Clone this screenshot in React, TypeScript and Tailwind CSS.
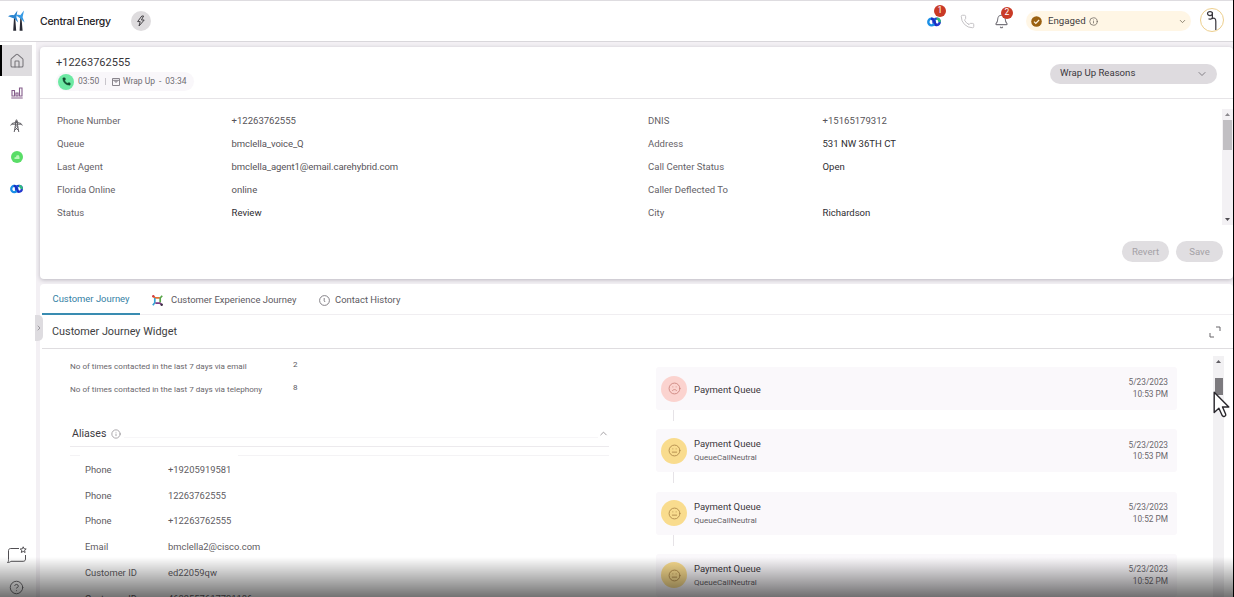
import React from 'react';
import { House, Phone, Bell, Info, ChevronDown, ChevronUp, ChevronRight, Frown, Meh, CircleHelp } from 'lucide-react';

const leftFields = [
  ['Phone Number', '+12263762555'],
  ['Queue', 'bmclella_voice_Q'],
  ['Last Agent', 'bmclella_agent1@email.carehybrid.com'],
  ['Florida Online', 'online'],
  ['Status', 'Review'],
];
const rightFields = [
  ['DNIS', '+15165179312'],
  ['Address', '531 NW 36TH CT'],
  ['Call Center Status', 'Open'],
  ['Caller Deflected To', ''],
  ['City', 'Richardson'],
];
const darkValues = ['Review', '531 NW 36TH CT', 'Open', 'Richardson'];
const aliases = [
  ['Phone', '+19205919581'],
  ['Phone', '12263762555'],
  ['Phone', '+12263762555'],
  ['Email', 'bmclella2@cisco.com'],
  ['Customer ID', 'ed22059qw'],
  ['Customer ID', '4689557617731186'],
];
const events = [
  { note: '', time: '10:53 PM' },
  { note: 'QueueCallNeutral', time: '10:53 PM' },
  { note: 'QueueCallNeutral', time: '10:52 PM' },
  { note: 'QueueCallNeutral', time: '10:52 PM' },
];

function Turbines() {
  return (
    <svg className="h-[22px] w-[18px]" viewBox="0 0 18 22" fill="none">
      <path d="M6 8 5.2 20.8h3L7.2 8zM12.3 8l-.7 12.8h3L13.5 8z" fill="#292b35" />
      <path d="M0 6.2c2-1 4-1.6 6-.9L9.4.6 8.4 7.2l1.8 5.2L6.2 8.6z" fill="#2c86d0" />
      <path d="M7.5 5c1.6-.4 3.4-.3 4.8.2L16 .6l-1.4 6.6 2 5.2-4.2-4z" fill="#379be6" />
    </svg>
  );
}

function Webex({ className }: { className: string }) {
  return (
    <svg className={className} viewBox="0 0 14 10" fill="none" strokeWidth="2.4">
      <circle cx="9.6" cy="4.8" r="3.2" stroke="#2438cf" />
      <path d="M9.6 1.6c2 0 3.3 1.5 3 3.6" stroke="#2fc07c" />
      <ellipse cx="4.6" cy="5" rx="3.3" ry="3.4" stroke="#1a8fe6" />
      <path d="M4 1.7c2 0 3 1.5 3.6 3.3.5 1.7 1.1 2.7 2 3" stroke="#1a2fc2" />
    </svg>
  );
}

function Field({ label, value }: { label: string; value: string }) {
  return (
    <div className="flex h-[23.1px] items-center">
      <span className="w-[174.5px] text-[#656267]">{label}</span>
      <span className={darkValues.includes(value) ? 'text-[#2e2c30]' : value.includes('_') ? 'tracking-[-0.09px] text-[#565358]' : 'text-[#565358]'}>{value}</span>
    </div>
  );
}

function Header() {
  return (
    <header className="flex h-[42px] shrink-0 items-center border-t border-b border-t-[#dedce0] border-b-[#d9d7db] bg-white">
      <div className="ml-2 flex w-8 items-center"><Turbines /></div>
      <h1 className="mt-px w-[91px] font-['Inter',sans-serif] text-[10.5px] font-medium tracking-[-0.25px] text-[#242226]">Central Energy</h1>
      <div className="flex size-5 items-center justify-center rounded-full bg-[#dedcde]">
        <svg className="size-[12px]" viewBox="0 0 12 12" fill="none" stroke="#464448" strokeWidth="1" strokeLinejoin="round"><path d="M6.8 1 2.6 6.6h2.6L4 11l5.2-6H6.4L8.6 1z" /></svg>
      </div>
      <div className="ml-auto flex h-full items-center">
        <div className="relative mr-[19px] flex">
          <Webex className="mt-px h-[10px] w-[14px]" />
          <span className="absolute -top-[11px] left-[7px] flex size-[12px] items-center justify-center rounded-full bg-[#c93a26] text-[8.5px] text-white">1</span>
        </div>
        <Phone className="mr-[19px] size-[15px] text-[#bbb9bd]" strokeWidth={1.4} />
        <div className="relative mr-[17px] flex">
          <Bell className="size-[15px] text-[#77757c]" strokeWidth={1.7} />
          <span className="absolute -top-[7px] left-[7px] flex size-[12px] items-center justify-center rounded-full bg-[#c93a26] text-[8.5px] text-white">2</span>
        </div>
        <div className="mr-[9px] flex h-5 w-[165px] items-center rounded-full bg-[#fff6e5] pr-[4px] pl-[5px]">
          <svg className="size-[11px]" viewBox="0 0 11 11">
            <circle cx="5.5" cy="5.5" r="5.3" fill="#9a6010" />
            <path d="m3 5.6 1.8 1.8L8.1 4" stroke="#fff6e5" strokeWidth="1.2" fill="none" />
          </svg>
          <span className="mt-px ml-[6px] w-[38px] text-[9.7px] text-[#3f3d3e]">Engaged</span>
          <Info className="ml-[3px] size-[9px] text-[#6c665e]" strokeWidth={2} />
          <ChevronDown className="ml-auto size-[9px] text-[#807764]" strokeWidth={2.3} />
        </div>
        <div className="-mt-[2px] mr-[9px] flex size-6 items-center justify-center rounded-full border border-[#edcf8d] bg-white">
          <svg className="size-[22px]" viewBox="0 0 22 22" fill="none" stroke="#37353b" strokeWidth="1.2">
            <ellipse cx="9" cy="4.6" rx="2.5" ry="2" />
            <path d="M11.4 3.5v4.8c0 2-2.8 2.2-3.9 1.5M11 9.6c2.8-1.2 3.8.4 3.8 3V21" />
          </svg>
        </div>
      </div>
    </header>
  );
}

function Sidebar() {
  return (
    <nav className="flex w-[36px] shrink-0 flex-col bg-white pt-[3px]">
      <div className="flex h-[31px] w-8 items-center justify-center border-l-2 border-black bg-[#dedcdf]">
        <House className="size-4 text-[#77757a]" strokeWidth={1.6} />
      </div>
      <div className="flex w-[33px] flex-col items-center">
        <svg className="mt-[11px] h-[12px] w-[12px]" viewBox="0 0 12 12" fill="none" stroke="#845c8a" strokeWidth="1.1">
          <path d="M.3 11h11.4M1 3.5h2.5V9H1zM5 6h2v3H5zM8.5 1H11v8H8.5z" />
        </svg>
        <svg className="mt-[20px] h-[14px] w-[13px]" viewBox="0 0 13 14" fill="none" stroke="#626066" strokeWidth="1">
          <path d="m5.5 2.5 1-1.8 1 1.8M4.2 13l1.3-7V2.5h2V6l1.3 7M.7 6.5 2 4.5l3.5-1h2l3.5 1 1.3 2M2 5.2h9M5 11l3.2-3M8 11 4.9 8M5.5 6l2 2" />
        </svg>
        <div className="mt-[18px] flex size-[12px] items-center justify-center rounded-full bg-[#59dd67]">
          <svg className="size-[8px]" viewBox="0 0 8 8"><path d="M1.5 6V4.5L3 4l.5-1.5L5.5 2l1 2v2z" fill="#b9f7b9" /></svg>
        </div>
        <Webex className="mt-[20.5px] h-[10px] w-[13px]" />
      </div>
      <div className="mt-auto flex w-[33px] flex-col items-center">
        <svg className="h-[18px] w-[20px]" viewBox="0 0 20 18" fill="none" stroke="#514f53">
          <path d="M12 2.5H3.7C2.3 2.5 1.5 3.4 1.5 4.6v8.9c0 2-.3 2.6-1 3 1.6.2 2.5-.5 3.5-1.2h12.2c1.5 0 2.3-.9 2.3-2.3V9" />
          <path d="m16.2.8.9 2 2.1.2-1.6 1.4.5 2.1-1.9-1.1-1.9 1.1.5-2.1L13.2 3l2.1-.2z" />
        </svg>
        <CircleHelp className="mt-[16px] mb-[2px] size-[15px] text-[#68666a]" strokeWidth={1.5} />
      </div>
    </nav>
  );
}

function Interaction() {
  return (
    <section className="flex h-[232px] shrink-0 flex-col rounded-[4px] bg-white shadow-[0_1px_4px_#bab7bf]">
      <div className="flex h-[52px] shrink-0 items-center border-b border-[#e6e4e7] pr-[16px] pl-[16px]">
        <div className="flex flex-col">
          <div className="h-[16px] pt-px text-[11px] leading-[16px] text-[#38363a]">+12263762555</div>
          <div className="mt-[2px] flex h-[19px] w-[138px] items-center rounded-full bg-[#f9f7fa] pl-[2px] text-[8.5px] text-[#706d73]">
            <div className="flex size-4 items-center justify-center rounded-full bg-[#6ce9a3]">
              <Phone className="size-[9px] fill-[#124e31] text-[#124e31]" strokeWidth={1} />
            </div>
            <span className="ml-[4px] w-[21px]">03:50</span>
            <span className="mx-[6px] h-[7px] w-px bg-[#c8c5cb]" />
            <svg className="mr-[3px] size-[8px]" viewBox="0 0 8 8" fill="none" stroke="#89858c"><path d="M.5.5h7v7h-7zM.5 2.3h7M3 2.3V4h2V2.3" /></svg>
            <span className="whitespace-nowrap">Wrap Up</span><span className="mx-[4px]">-</span><span>03:34</span>
          </div>
        </div>
        <div className="mt-[2px] ml-auto flex h-5 w-[167px] items-center justify-between rounded-full bg-[#dedbdf] pr-[9px] pl-[10px] text-[9.6px] text-[#3b383d]">
          Wrap Up Reasons<ChevronDown className="size-[12px] text-[#77747a]" strokeWidth={1.8} />
        </div>
      </div>
      <div className="mt-[10px] flex h-[116px] pl-[17px] text-[9.55px]">
        <div className="w-[591px] pt-[0.5px]">{leftFields.map(([a, b]) => <Field key={a} label={a} value={b} />)}</div>
        <div className="flex-1 pt-[0.5px]">{rightFields.map(([a, b]) => <Field key={a} label={a} value={b} />)}</div>
        <div className="flex w-[11px] flex-col items-center bg-[#f3f1f4] py-[4px]">
          <svg className="h-[3px] w-[5px]" viewBox="0 0 5 3"><path d="M0 3h5L2.5 0z" fill="#8b898e" /></svg>
          <div className="mt-[4px] h-[30px] w-[9px] bg-[#c1bfc3]" />
          <svg className="mt-auto h-[3px] w-[5px]" viewBox="0 0 5 3"><path d="M0 0h5L2.5 3z" fill="#4f4d52" /></svg>
        </div>
      </div>
      <div className="mt-[16px] flex justify-end gap-[7px] pr-[10px] text-[9.6px] text-[#a4a1a6]">
        <div className="flex h-[21px] w-[47px] items-center justify-center rounded-full bg-[#e0dee1] pt-px">Revert</div>
        <div className="flex h-[21px] w-[47px] items-center justify-center rounded-full bg-[#e0dee1] pt-px">Save</div>
      </div>
    </section>
  );
}

function JourneyIcon() {
  return (
    <svg className="size-[11px]" viewBox="0 0 11 11" fill="none" strokeWidth="1.7">
      <path d="m.8.8 2.4 2h4.6" stroke="#e57235" />
      <path d="M10.2.8 8.2 3v4.5" stroke="#57a447" />
      <path d="M.8 10.2l2-2.4V3" stroke="#36a3d5" />
      <path d="m10.2 10.2-2.4-2H3.4" stroke="#7c3b84" />
      <circle cx="1.3" cy="1.3" r="1.2" fill="#d43e43" /><circle cx="9.7" cy="9.7" r="1.2" fill="#403048" />
    </svg>
  );
}

function ClockIcon() {
  return (
    <svg className="size-[11px]" viewBox="0 0 11 11" fill="none" stroke="#77747a" strokeWidth=".9"><circle cx="5.5" cy="5.5" r="4.9" /><path d="M5.2 3v2.8l.9 1.2" /></svg>
  );
}

function Journey() {
  return (
    <section className="mt-[5px] flex min-h-0 flex-1 flex-col rounded-t-[4px] bg-white">
      <div className="ml-[2px] flex h-[31px] shrink-0 items-stretch border-b border-[#f0eef1] text-[9.45px] text-[#5d5a5f]">
        <div className="-mb-px flex w-[98px] items-center justify-center border-b-2 border-[#398cb1] pt-[2px] text-[#357fa5]">Customer Journey</div>
        <div className="mt-[2px] ml-[12px] flex w-[167px] items-center gap-[8px]"><JourneyIcon />Customer Experience Journey</div>
        <div className="mt-[2px] flex items-center gap-[5px]"><ClockIcon />Contact History</div>
      </div>
      <div className="ml-[2px] flex h-[34px] shrink-0 items-center justify-between border-b border-[#dfdde0] pr-[12px] pl-[10px] text-[10.85px] text-[#403e42]">
        <span className="mt-[2px]">Customer Journey Widget</span>
        <svg className="size-[12px]" viewBox="0 0 12 12" fill="none" stroke="#68666a"><path d="M7 1h4v4M1 7v4h4" /></svg>
      </div>
      <div className="flex min-h-0 flex-1 overflow-hidden">
        <div className="w-[569px] pt-[5px] pl-[30px]">
          <div className="flex h-[23px] items-center text-[8.1px] text-[#69666b]"><span className="mt-px w-[223px]">No of times contacted in the last 7 days via email</span><span className="mb-[3px] text-[#59565c]">2</span></div>
          <div className="flex h-[23px] items-center text-[8.1px] text-[#69666b]"><span className="mt-px w-[223px]">No of times contacted in the last 7 days via telephony</span><span className="mb-[3px] text-[#59565c]">8</span></div>
          <div className="mt-[21px] flex h-[26px] items-center border-b border-[#eceaed] pr-0 pl-[2px] text-[10.6px] text-[#3d3a3f]">
            Aliases<Info className="ml-[5px] size-[10px] text-[#8f8c91]" strokeWidth={1.8} />
            <div className="ml-[3px] mt-[7px] h-px flex-1 bg-[#f7f6f8]" />
            <ChevronUp className="size-[11px] text-[#8f8c91]" strokeWidth={1.8} />
          </div>
          <div className="mt-[8px] flex h-px justify-between"><span className="w-[10px] bg-[#f4f3f5]" /><span className="w-[371px] bg-[#f4f3f5]" /></div>
          <div className="pt-px pl-[15px] text-[9.4px] text-[#5e5b61]">
            {aliases.map(([a, b], i) => <div key={i} className="flex h-[25.75px] items-center"><span className="w-[83px]">{a}</span><span>{b}</span></div>)}
          </div>
        </div>
        <div className="ml-[47px] w-[521px] pt-[18px]">
          {events.map((e, i) => (
            <div key={i} className="h-[62.3px]">
              <div className="flex h-[43px] items-center rounded-[3px] bg-[#faf8fb] pr-[9px] pl-[5px]">
                <div className={i === 0 ? 'flex size-[26px] items-center justify-center rounded-full bg-[#fbd3cf] text-[#cb837c]' : 'flex size-[26px] items-center justify-center rounded-full bg-[#f9dc8e] text-[#ae8849]'}>
                  {i === 0 ? <Frown className="size-[13px]" strokeWidth={1.6} /> : <Meh className="size-[13px]" strokeWidth={1.6} />}
                </div>
                <div className={i === 0 ? 'ml-[7px] flex flex-col pt-[2px]' : 'ml-[7px] flex flex-col'}>
                  <span className="text-[9.5px] leading-[14px] text-[#3a373c]">Payment Queue</span>
                  {e.note && <span className="text-[8.1px] leading-[13px] text-[#656267]">{e.note}</span>}
                </div>
                <div className="ml-auto pt-px text-right text-[8.3px] leading-[11.7px] text-[#69666b]"><div>5/23/2023</div><div>{e.time}</div></div>
              </div>
              <div className="ml-[17px] h-[11px] w-px bg-[#e6e3e7]" />
            </div>
          ))}
        </div>
        <div className="relative mt-[7px] ml-[36px] flex w-[11px] flex-col items-center bg-[#f2f1f3] pt-[4px]">
          <svg className="h-[3px] w-[5px]" viewBox="0 0 5 3"><path d="M0 3h5L2.5 0z" fill="#615f64" /></svg>
          <div className="mt-[15px] h-[17px] w-[8px] bg-[#7c7a7e]" />
          <svg className="absolute top-[35px] left-0 h-[28px] w-[18px]" viewBox="0 0 18 28"><path d="M1.2 1.2v20.3l4.7-4.3 3.4 7.5c1 1.6 4 .4 3.4-1.4L9.5 16h6.3z" fill="white" stroke="#29272c" strokeWidth="1.4" strokeLinejoin="round" /></svg>
        </div>
      </div>
    </section>
  );
}

export default function App() {
  return (
    <div className="relative flex h-[597px] w-[1234px] flex-col overflow-hidden border-r border-black bg-[#f3f0f4] font-['Roboto',sans-serif]">
      <Header />
      <div className="flex min-h-0 flex-1">
        <Sidebar />
        <main className="relative ml-[4px] flex min-w-0 flex-1 flex-col pt-[5px]">
          <Interaction />
          <Journey />
          <div className="absolute top-[273px] -left-[5px] flex h-[26px] w-[8px] items-center justify-center rounded-r-[5px] bg-[#dedce0]"><ChevronRight className="size-[8px] text-[#77747a]" /></div>
        </main>
      </div>
      <div className="pointer-events-none absolute inset-x-0 bottom-0 h-[40px] bg-linear-to-b from-transparent to-black/55" />
    </div>
  );
}
